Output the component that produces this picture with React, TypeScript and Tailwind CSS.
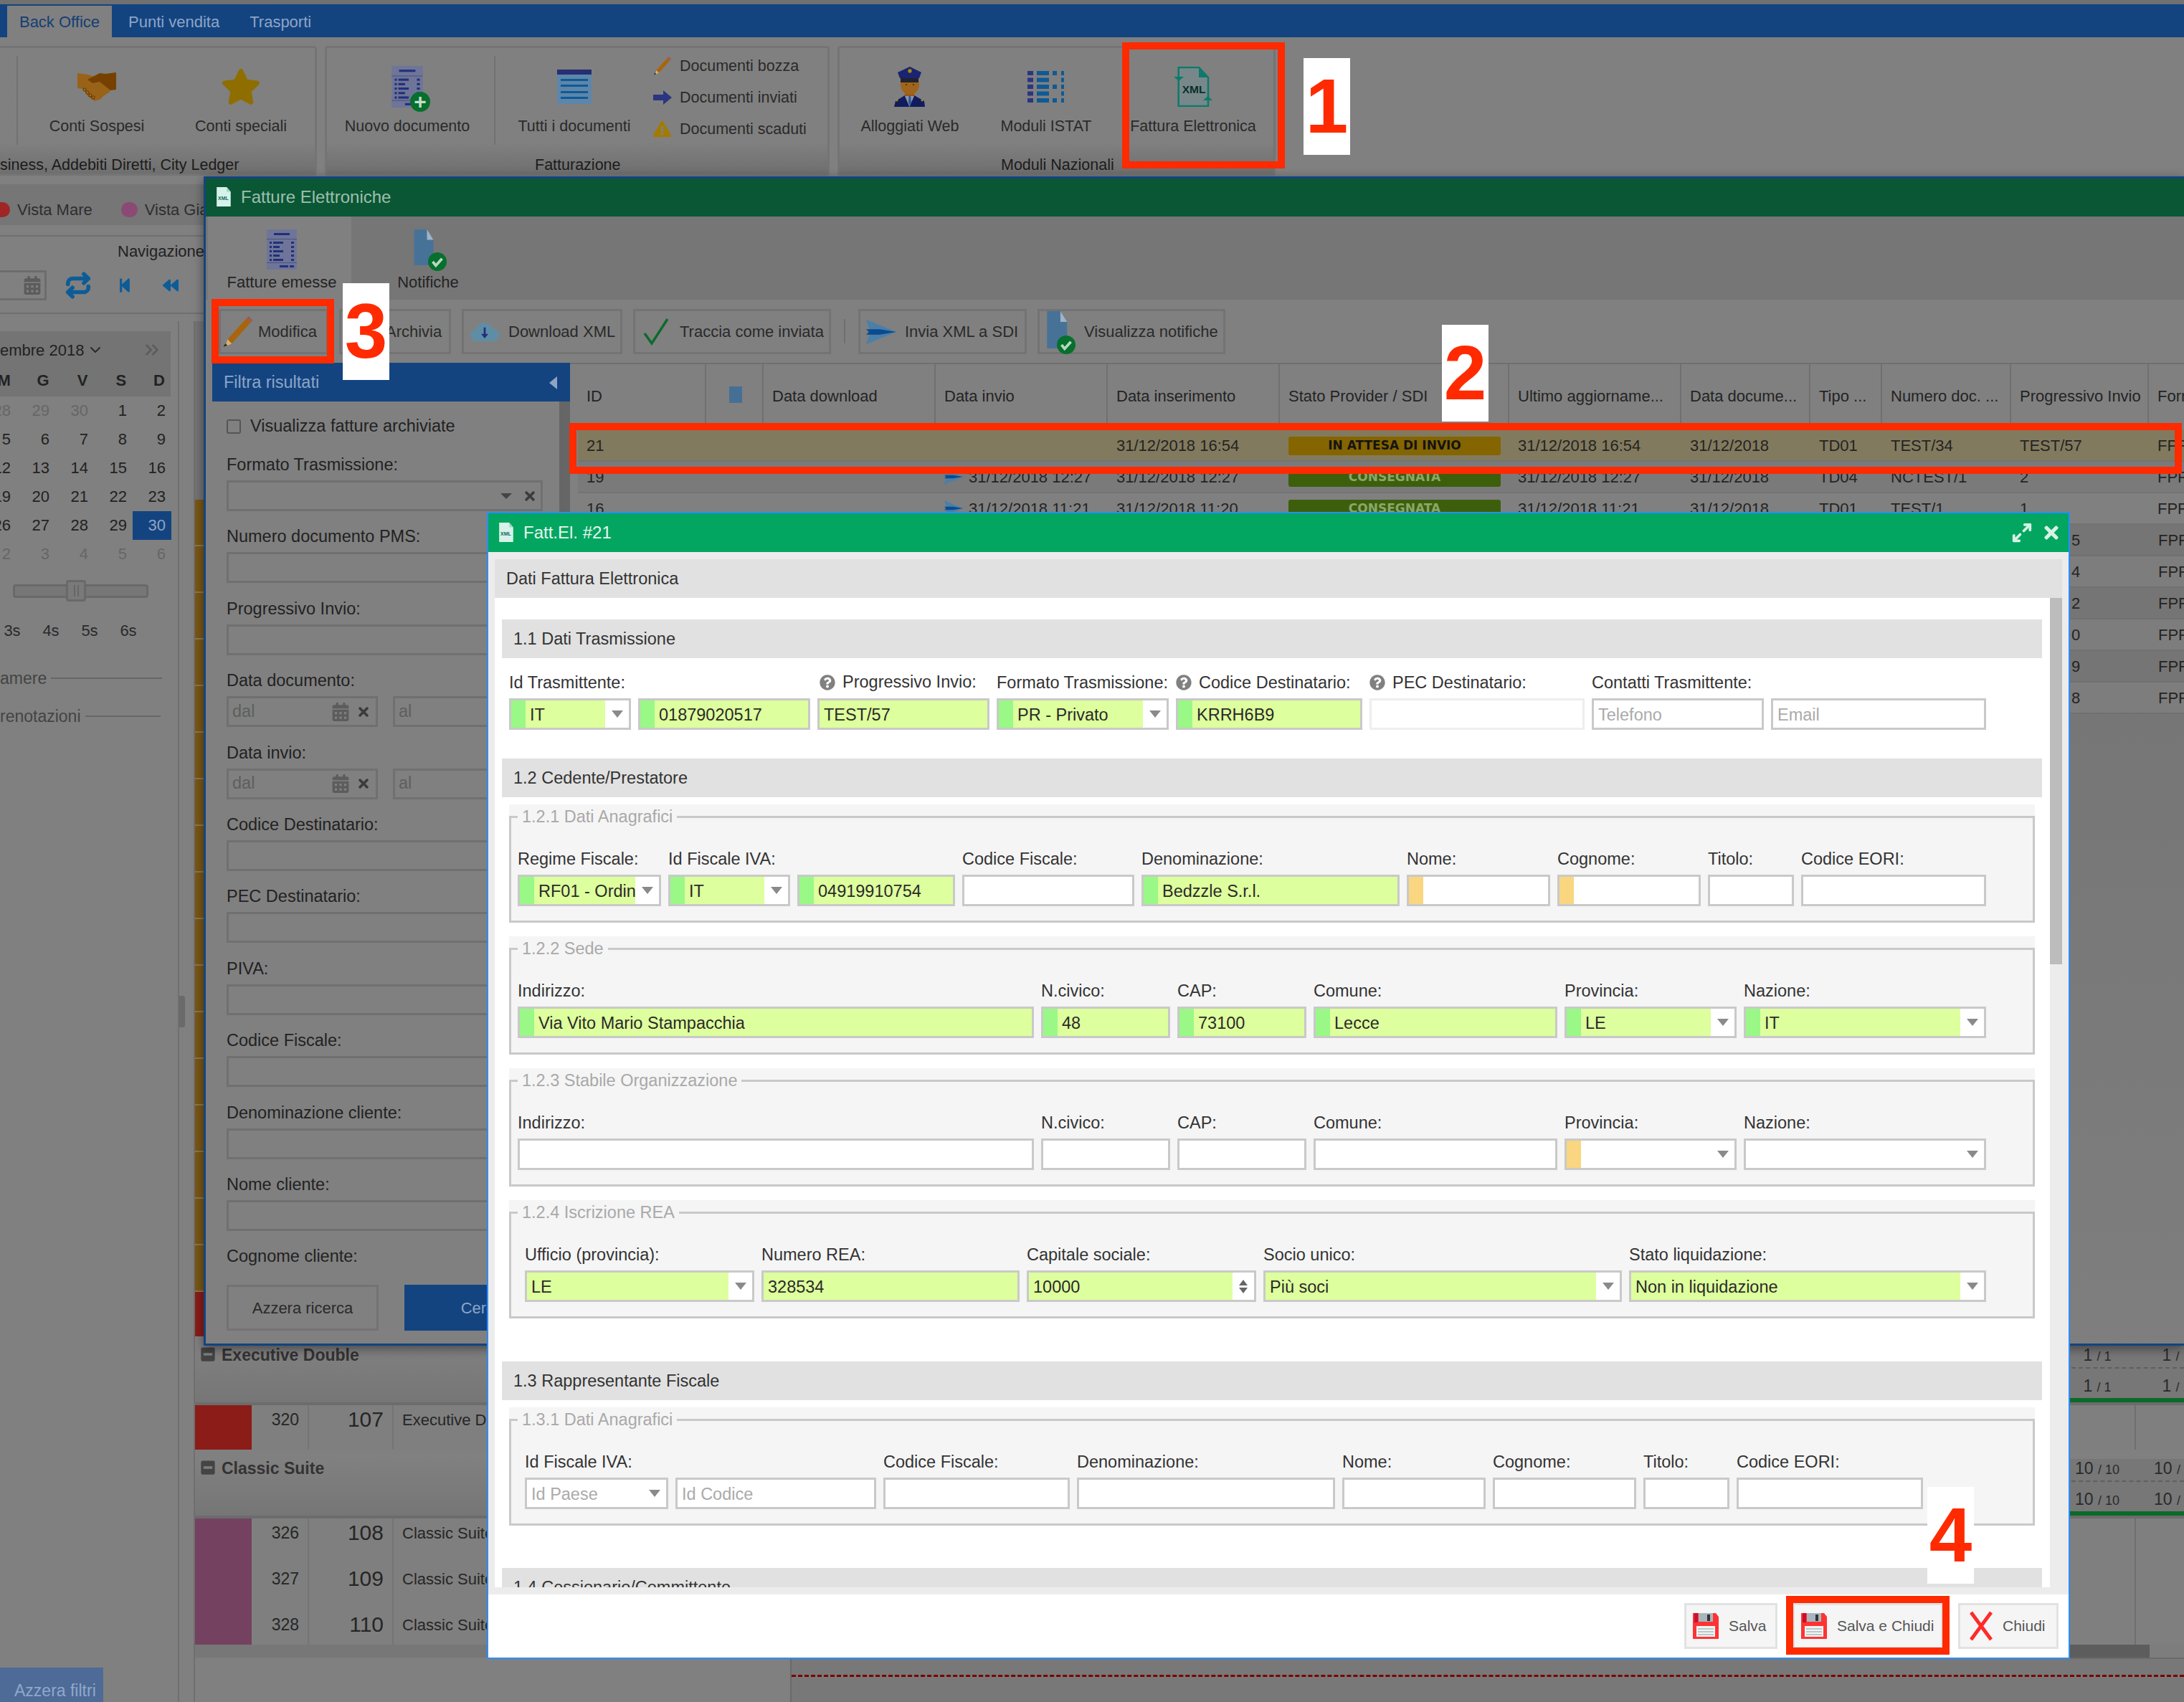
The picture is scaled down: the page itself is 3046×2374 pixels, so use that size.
import { ChevronDown, ChevronsRight, Maximize2, Repeat } from "lucide-react";
import {
  FaBackward,
  FaCalendarAlt,
  FaExclamationTriangle,
  FaMinusSquare,
  FaQuestionCircle,
  FaStar,
  FaStepBackward,
  FaTimes
} from "react-icons/fa";

const DocIcon = ({ className = "w-[54px] h-[58px]" }: { className?: string }) => (
  <svg viewBox="0 0 42 56" className={className}>
    <rect width="42" height="56" fill="#6e7598" />
    <rect x="10" y="5" width="22" height="3" fill="#22307a" />
    <rect y="13" width="42" height="1" fill="#4a5380" />
    <rect y="46" width="42" height="1" fill="#4a5380" />
    {[17, 23, 29, 35, 41].map(y => (
      <g key={y} fill="#22307a">
        <rect x="4" y={y} width="3" height="3" />
        <rect x="9" y={y} width={y % 4 === 1 ? 14 : 9} height="3" />
        <rect x="34" y={y} width="4" height="3" />
      </g>
    ))}
    <rect x="18" y="50" width="12" height="3" fill="#22307a" />
    <rect x="32" y="50" width="6" height="3" fill="#22307a" />
  </svg>
);

const GreenCheck = () => (
  <svg viewBox="0 0 24 24" className="absolute right-[-2px] bottom-[-2px] w-[26px] h-[26px]">
    <circle cx="12" cy="12" r="12" fill="#06702c" />
    <path d="M6 12l4 5 8-9" fill="none" stroke="#b8d8c0" strokeWidth="3.5" />
  </svg>
);

const FileCheck = ({ className }: { className: string }) => (
  <div className={`relative ${className}`}>
    <svg viewBox="0 0 30 56" className="w-[75%] h-[90%]">
      <path d="M0 0h20l10 16v40H0z" fill="#477298" />
      <path d="M20 0l10 16H20z" fill="#9fb4c6" />
    </svg>
    <GreenCheck />
  </div>
);

const XmlIcon = ({ small }: { small?: boolean }) =>
  small ? (
    <svg viewBox="0 0 24 30" className="w-[23px] h-[28px]">
      <path d="M2 0h15l6 7v22H2z" fill="#d6f2ea" />
      <path d="M17 0l6 7h-6z" fill="#9fd8c8" />
      <text x="12" y="19" fontSize="7.5" textAnchor="middle" fill="#0a6a55" fontFamily="Liberation Sans" fontWeight="700">
        XML
      </text>
    </svg>
  ) : (
    <svg viewBox="0 0 54 56" className="w-[54px] h-[56px]">
      <path d="M6.700 1h28.300L48 15v40H6.700z" fill="#78888a" stroke="#0d7a6b" strokeWidth="2.500" />
      <path d="M35 1l13 14H35z" fill="#0d7a6b" />
      <path d="M0 14h14l-7 6zM41 47l6.500-6 6.500 6z" fill="#0d7a6b" />
      <text x="28" y="37" fontSize="15.5" textAnchor="middle" fill="#0a2f2a" fontFamily="Liberation Sans" fontWeight="700">
        XML
      </text>
    </svg>
  );

const Handshake = () => (
  <svg viewBox="0 0 54 41" className="w-[54px] h-[41px]">
    <path d="M0 1l14 2 17 5 15 17-2 3-8 5-3 4-9 3-10-7-6-10-8-1z" fill="#986218" />
    <path d="M14 10L31 1l8 1L54 0v24l-8 1-15-12-10 2z" fill="#764100" />
    {[[10, 24], [14, 28], [18, 32], [22, 35]].map(([cx, cy]) => (
      <circle key={cx} cx={cx} cy={cy} r="2" fill="#a5701e" stroke="#6a3c06" strokeWidth="1.200" />
    ))}
  </svg>
);

const Pencil = ({ className }: { className: string }) => (
  <svg viewBox="0 0 30 30" className={className}>
    <path d="M5 22L23 2l4 4L9 26z" fill="#a9640c" />
    <path d="M23 2l2-2 4 4-2 2z" fill="#9a5a5a" />
    <path d="M5 22l4 4-6 3z" fill="#d4b070" />
    <path d="M1 29l2-3 2 2z" fill="#222" />
  </svg>
);

const Send = ({ className }: { className: string }) => (
  <svg viewBox="0 0 44 36" className={className}>
    <path d="M0 0l44 18L0 36l6-18z" fill="#4a7fa8" />
    <path d="M0 14h20l24 4-24 4H0l4-4z" fill="#0a4a90" />
  </svg>
);

const Cloud = () => (
  <svg viewBox="0 0 44 32" className="w-[40px] h-[30px]">
    <path d="M10 30a9 9 0 0 1-1-18 13 13 0 0 1 25-1 9.500 9.500 0 0 1 1 19z" fill="#5e8ea6" />
    <path d="M20.500 9h3v10h4l-5.500 7-5.500-7h4z" fill="#232f7c" />
  </svg>
);

const Check = () => (
  <svg viewBox="0 0 38 40" className="w-[38px] h-[40px]">
    <path d="M3 22l10 14L35 2" fill="none" stroke="#0e6a2c" strokeWidth="3.500" />
  </svg>
);

const Officer = () => (
  <svg viewBox="0 0 44 60" className="w-[44px] h-[60px]">
    <path d="M0 58l2-8 13-8h13l14 8 1 8z" fill="#101c5e" />
    <path d="M15 43h13l-6.500 15z" fill="#8d95a8" />
    <path d="M20.500 43h2.500l1 9-2 5-2-5z" fill="#2a5a96" />
    <rect x="15" y="36" width="13" height="7" fill="#9a5816" />
    <ellipse cx="22" cy="27" rx="13" ry="14" fill="#a0651a" />
    <rect x="9" y="17" width="25" height="7" fill="#222230" />
    <path d="M5 10L22 2l16 8-3 8H8z" fill="#1a2470" />
    <circle cx="22" cy="8" r="2.700" fill="#a88a10" />
    <circle cx="4" cy="49" r="1.500" fill="#a88a10" />
    <circle cx="39" cy="49" r="1.500" fill="#a88a10" />
    <circle cx="17" cy="27" r="1" fill="#3a2208" />
    <circle cx="27" cy="27" r="1" fill="#3a2208" />
  </svg>
);

const GridList = () => (
  <svg viewBox="0 0 52 44" className="w-[52px] h-[44px]">
    {[0, 9.500, 19, 28.500, 38].map((y, i) => (
      <g key={y}>
        <rect y={y} width="8" height="6" fill="#2c357f" />
        <rect x="13" y={y} width="17" height="6" fill="#0f5a95" />
        {i % 2 === 0 && <rect x="35" y={y} width="6" height="6" fill="#0f5a95" />}
        <rect x="47" y={y} width="4" height="6" fill="#0f5a95" />
      </g>
    ))}
  </svg>
);

const DocLines = () => (
  <svg viewBox="0 0 48 48" className="w-[48px] h-[48px]">
    <rect width="48" height="48" fill="#5d86aa" />
    <rect width="48" height="7" fill="#252f72" />
    {[13, 21, 30, 38].map(y => (
      <rect key={y} x="5" y={y} width="38" height="3" fill="#0f5a95" />
    ))}
  </svg>
);

const Floppy = () => (
  <svg viewBox="0 0 36 36" className="w-[36px] h-[36px] shrink-0">
    <path d="M0 0h32l4 5v31H0z" fill="#ff3333" />
    <rect x="8" y="0" width="20" height="12" fill="#a9b5bd" />
    <rect x="2" y="0" width="5" height="13" fill="#c8102e" />
    <rect x="20" y="2" width="4" height="9" fill="#333" />
    <rect x="5" y="18" width="26" height="15" fill="#f4f4f4" />
    {[21, 25, 29].map(y => (
      <rect key={y} x="7" y={y} width="22" height="2" fill="#b8c8c8" />
    ))}
  </svg>
);

const RibbonItem = ({ icon, label, w }: { icon: React.ReactNode; label: string; w: string }) => (
  <div className={`${w} flex flex-col items-center pt-[12px] shrink-0`}>
    <div className="h-[84px] flex items-center justify-center">{icon}</div>
    <span className="h-[26px] leading-[26px] text-[21.500px] text-[#2a2a2a] whitespace-nowrap">{label}</span>
  </div>
);

const RibbonSep = () => <div className="w-[2px] h-[124px] mt-[11px] bg-[#717171] shrink-0" />;

const RibbonGroup = ({ className, caption, children }: { className: string; caption: React.ReactNode; children: React.ReactNode }) => (
  <div className={`${className} h-[181px] border-[3px] border-[#747474] rounded-[4px] bg-gradient-to-b from-[#808080] from-75% to-[#6f6f6f] flex flex-col overflow-hidden shrink-0`}>
    <div className="flex flex-1">{children}</div>
    <div className="h-[24px] leading-[24px] text-[21.500px] text-[#1c1c1c] whitespace-nowrap">{caption}</div>
  </div>
);

const days = [
  [28, 29, 30, 1, 2],
  [5, 6, 7, 8, 9],
  [12, 13, 14, 15, 16],
  [19, 20, 21, 22, 23],
  [26, 27, 28, 29, 30],
  [2, 3, 4, 5, 6]
];

const Sidebar = () => (
  <div className="w-[250px] border-r-2 border-[#6f6f6f] flex flex-col shrink-0 overflow-hidden">
    <div className="mt-[14px] w-[238px] h-[91px] bg-[#747474] flex flex-col">
      <div className="flex items-center h-[52px] text-[22px] text-[#222] whitespace-nowrap">
        <span>embre 2018</span>
        <ChevronDown className="ml-[4px] w-[24px] h-[24px] text-[#2a2a2a]" strokeWidth={2} />
        <ChevronsRight className="ml-[52px] w-[30px] h-[30px] text-[#5c5c5c]" strokeWidth={2} />
      </div>
      <div className="flex ml-[-31px] text-[22px] font-bold text-[#222]">
        {["M", "G", "V", "S", "D"].map(d => (
          <span key={d} className="w-[54px] text-right pr-[8px]">{d}</span>
        ))}
      </div>
    </div>
    {days.map((week, i) => (
      <div key={i} className="flex ml-[-31px] h-[40px] items-center text-[22px]">
        {week.map((d, j) => {
          const other = i === 0 && j < 3 || i === 5;
          const active = i === 4 && j === 4;
          return (
            <span
              key={j}
              className={`w-[54px] h-[40px] leading-[40px] text-right pr-[8px] ${active ? "bg-[#134480] text-[#90a5c0]" : other ? "text-[#666]" : "text-[#222]"}`}
            >
              {d}
            </span>
          );
        })}
      </div>
    ))}
    <div className="relative mt-[22px] ml-[18px] w-[189px] h-[19px] bg-[#777] border-[3px] border-[#696969] rounded-[4px]">
      <div className="absolute left-[71px] top-[-9px] w-[28px] h-[30px] bg-[#7a7a7a] border-[3px] border-[#696969] rounded-[4px] flex items-center justify-center gap-[3px]">
        <span className="w-[2px] h-[16px] bg-[#666]" />
        <span className="w-[2px] h-[16px] bg-[#666]" />
      </div>
    </div>
    <div className="flex ml-[-10px] mt-[29px] text-[22px] text-[#2a2a2a]">
      {["3s", "4s", "5s", "6s"].map(s => (
        <span key={s} className="w-[54px] text-center">{s}</span>
      ))}
    </div>
    <div className="flex items-center mt-[36px] text-[23px] text-[#444] h-[28px]">
      <span>amere</span>
      <div className="ml-[6px] w-[155px] h-[2px] bg-[#666]" />
    </div>
    <div className="flex items-center mt-[25px] text-[23px] text-[#444] h-[28px]">
      <span>renotazioni</span>
      <div className="ml-[6px] w-[105px] h-[2px] bg-[#666]" />
    </div>
    <div className="mt-auto w-[144px] h-[48px] bg-[#4e6a96] pl-[20px] text-[23px] leading-[64px] text-[#8fa8cc] whitespace-nowrap overflow-hidden">
      Azzera filtri
    </div>
  </div>
);

const RightCells = () => (
  <div className="ml-auto flex w-[167px] h-full shrink-0">
    <div className="w-[100px] border-r-2 border-[#6f6f6f]" />
  </div>
);

const Ratio = ({ value, className }: { value: number; className: string }) => (
  <span className={`w-[100px] shrink-0 text-center whitespace-nowrap ${className}`}>
    {value} <span className="text-[18px]">/ {value}</span>
  </span>
);

const GroupHeader = ({ label, value }: { label: string; value: number }) => (
  <div className="flex h-[79px] bg-gradient-to-b from-[#808080] to-[#767676]">
    <div className="flex items-start gap-[9px] pl-[8px] font-bold text-[23px] leading-[26px] text-[#333] w-[410px] shrink-0">
      <FaMinusSquare className="w-[20px] h-[22px] mt-[1px] text-[#444]" />
      <span>{label}</span>
    </div>
    <div className="ml-auto w-[167px] shrink-0 text-[#2a2a2a] text-[23px] bg-[#777777] overflow-hidden">
      <div className="flex h-[32px] leading-[26px] border-b-2 border-dashed border-[#5f5f5f]">
        <Ratio value={value} className="pr-[8px]" />
        <Ratio value={value} className="pl-[12px]" />
      </div>
      <div className="flex h-[47px] pt-[7px] border-b-[6px] border-[#0a6a2a]">
        <Ratio value={value} className="pr-[8px]" />
        <Ratio value={value} className="pl-[12px]" />
      </div>
    </div>
  </div>
);

const GridRow = ({ colour, code, room, name, h }: { colour: string; code: number; room: number; name: string; h: string }) => (
  <div className={`flex ${h} text-[#262626] bg-[#7f7f7f]`}>
    <div className={`w-[79px] ${colour}`} />
    <div className="w-[80px] border-r-2 border-[#747474] flex items-start justify-end pr-[12px] pt-[3px] text-[23px]">{code}</div>
    <div className="w-[118px] border-r-2 border-[#747474] flex items-start justify-end pr-[12px] pt-[5px] text-[30px] leading-[30px]">{room}</div>
    <div className="pl-[12px] pt-[4px] text-[22px] whitespace-nowrap">{name}</div>
    <RightCells />
  </div>
);

const BaseGrid = () => (
  <div className="flex-1 min-w-0 border-l-2 border-[#6f6f6f] flex flex-col overflow-hidden">
    <div className="h-[1429px] flex flex-col w-[14px] shrink-0">
      <div className="h-[249px] bg-[#747474]" />
      {Array.from({ length: 17 }).map((_, i) => (
        <div key={i} className="h-[65px] bg-[#7a5715] border-b-2 border-[#8a7a50]" />
      ))}
      <div className="h-[62px] bg-[#8b1c18]" />
    </div>
    <GroupHeader label="Executive Double" value={1} />
    <div className="h-[4px] bg-[#6c6c6c]" />
    <GridRow colour="bg-[#8b1c18]" code={320} room={107} name="Executive Double" h="h-[62px]" />
    <div className="h-[13px] bg-[#808080]" />
    <GroupHeader label="Classic Suite" value={10} />
    <div className="h-[4px] bg-[#6c6c6c]" />
    <GridRow colour="bg-[#744260]" code={326} room={108} name="Classic Suite" h="h-[64px]" />
    <GridRow colour="bg-[#744260]" code={327} room={109} name="Classic Suite" h="h-[64px]" />
    <GridRow colour="bg-[#744260]" code={328} room={110} name="Classic Suite" h="h-[48px]" />
    <div className="h-[18px] bg-[#777] flex justify-end">
      <div className="w-[112px] bg-[#5d5d5d]" />
      <div className="w-[48px] bg-[#7d7d7d]" />
    </div>
    <div className="flex-1 bg-[#787878] border-t-2 border-[#6a6a6a] ml-[830px] border-l-2 pt-[22px]">
      <div className="border-t-[3px] border-dashed border-[#7a0000]" />
    </div>
  </div>
);

const BaseApp = () => (
  <div className="flex flex-col h-full bg-[#808080]">
    <div className="h-[6px] bg-[#707070] shrink-0" />
    <div className="h-[46px] bg-[#134480] flex items-end pl-[10px] text-[22px] shrink-0">
      <div className="w-[146px] h-[44px] bg-[#808080] text-[#143f74] flex items-center justify-center">Back Office</div>
      <div className="h-[44px] flex items-center px-[23px] text-[#8ea5c6]">Punti vendita</div>
      <div className="h-[44px] flex items-center px-[19px] text-[#8ea5c6]">Trasporti</div>
    </div>
    <div className="h-[205px] pt-[12px] flex gap-[11px] shrink-0">
      <RibbonGroup className="w-[442px] rounded-l-none border-l-0" caption="siness, Addebiti Diretti, City Ledger">
        <div className="ml-[23px] flex">
          <RibbonSep />
          <div className="w-[10px]" />
          <RibbonItem w="w-[200px]" label="Conti Sospesi" icon={<Handshake />} />
          <RibbonItem w="w-[202px]" label="Conti speciali" icon={<FaStar className="w-[56px] h-[54px] text-[#8f6e00]" />} />
        </div>
      </RibbonGroup>
      <RibbonGroup className="w-[704px]" caption={<span className="pl-[290px]">Fatturazione</span>}>
        <RibbonItem
          w="w-[224px]"
          label="Nuovo documento"
          icon={
            <div className="relative">
              <DocIcon className="w-[44px] h-[58px]" />
              <div className="absolute right-[-10px] bottom-[-6px] w-[28px] h-[28px] rounded-full bg-[#06702c] flex items-center justify-center text-[#c8dccb] text-[30px] font-bold leading-none">+</div>
            </div>
          }
        />
        <div className="w-[9px]" />
        <RibbonSep />
        <RibbonItem w="w-[220px]" label="Tutti i documenti" icon={<DocLines />} />
        <div className="pt-[3px] flex flex-col text-[21.500px] text-[#2a2a2a]">
          {[
            { label: "Documenti bozza", icon: <Pencil className="w-[26px] h-[26px]" /> },
            {
              label: "Documenti inviati",
              icon: (
                <svg viewBox="0 0 26 20" className="w-[26px] h-[20px]">
                  <path d="M0 6h14V0l12 10-12 10v-6H0z" fill="#2c357f" />
                </svg>
              )
            },
            { label: "Documenti scaduti", icon: <FaExclamationTriangle className="w-[25px] h-[24px] text-[#a37a00]" /> }
          ].map(item => (
            <div key={item.label} className="h-[44px] flex items-center">
              <div className="w-[37px]">{item.icon}</div>
              <span className="whitespace-nowrap">{item.label}</span>
            </div>
          ))}
        </div>
      </RibbonGroup>
      <RibbonGroup className="w-[611px]" caption={<span className="pl-[225px]">Moduli Nazionali</span>}>
        <RibbonItem w="w-[196px]" label="Alloggiati Web" icon={<Officer />} />
        <RibbonItem w="w-[184px]" label="Moduli ISTAT" icon={<GridList />} />
        <RibbonItem w="w-[226px]" label="Fattura Elettronica" icon={<XmlIcon />} />
      </RibbonGroup>
    </div>
    <div className="h-[57px] pt-[14px] bg-[#767676] flex items-center text-[22px] text-[#2e2e2e] shrink-0">
      <div className="w-[14px] h-[21px] rounded-r-full bg-[#a02626]" />
      <span className="ml-[10px]">Vista Mare</span>
      <div className="ml-[40px] w-[23px] h-[21px] rounded-full bg-[#8a4a74]" />
      <span className="ml-[10px]">Vista Giardino</span>
    </div>
    <div className="h-[134px] pt-[14px] shrink-0">
      <div className="h-[110px] border-y-2 border-[#6f6f6f] flex flex-col">
        <div className="pl-[164px] pt-[4px] h-[36px] text-[22px] text-[#222]">Navigazione</div>
        <div className="flex items-center h-[44px] mt-[10px]">
          <div className="w-[65px] h-[42px] border-[3px] border-l-0 border-[#6d6d6d] flex items-center justify-end pr-[5px]">
            <FaCalendarAlt className="w-[24px] h-[26px] text-[#5c5c5c]" />
          </div>
          <Repeat className="ml-[25px] w-[38px] h-[38px] text-[#0d5c96]" strokeWidth={3.5} />
          <FaStepBackward className="ml-[36px] w-[20px] h-[22px] text-[#0d5c96]" />
          <FaBackward className="ml-[40px] w-[28px] h-[22px] text-[#0d5c96]" />
        </div>
      </div>
    </div>
    <div className="flex flex-1 min-h-0">
      <Sidebar />
      <div className="w-[20px] flex items-center shrink-0">
        <div className="w-[8px] h-[44px] bg-[#6a6a6a] rounded-r-[3px]" />
      </div>
      <BaseGrid />
    </div>
  </div>
);

const FilterField = ({ label, children }: { label: string; children?: React.ReactNode }) => (
  <div className="mb-[18.400px]">
    <div className="h-[34px] leading-[34px] text-[#222] whitespace-nowrap">{label}</div>
    <div className="mt-[5px] h-[43px] flex gap-[21px]">
      {children ?? <div className="w-full border-[3px] border-[#707070]" />}
    </div>
  </div>
);

const DateRange = () => (
  <>
    <div className="w-[211px] border-[3px] border-[#707070] flex items-center pl-[5px] pr-[7px] text-[#5e5e5e]">
      <span>dal</span>
      <FaCalendarAlt className="ml-auto w-[24px] h-[26px] text-[#5c5c5c]" />
      <FaTimes className="ml-[10px] w-[20px] h-[20px] text-[#3c3c3c]" />
    </div>
    <div className="w-[209px] border-[3px] border-[#707070] flex items-center pl-[5px] text-[#5e5e5e]">al</div>
  </>
);

const FilterPanel = () => (
  <div className="w-[508px] pl-[9px] flex flex-col shrink-0">
    <div className="h-[54px] bg-[#134480] flex items-center pl-[16px] pr-[18px] pt-[2px] text-[23.500px] text-[#8ea5c6] shrink-0">
      Filtra risultati
      <span className="ml-auto w-0 h-0 border-y-[9px] border-y-transparent border-r-[11px] border-r-[#8ea5c6]" />
    </div>
    <div className="flex h-[1210px] shrink-0 overflow-hidden">
      <div className="w-[484px] pl-[20px] pr-[23px] pt-[25px] text-[23.500px]">
        <div className="h-[20px] flex items-center mb-[26px] text-[#222]">
          <span className="w-[20px] h-[20px] border-2 border-[#555] rounded-[3px] mr-[13px]" />
          Visualizza fatture archiviate
        </div>
        <FilterField label="Formato Trasmissione:">
          <div className="w-full border-[3px] border-[#707070] flex items-center justify-end pr-[5px]">
            <span className="w-0 h-0 border-x-[8px] border-x-transparent border-t-[8px] border-t-[#444]" />
            <FaTimes className="ml-[15px] w-[20px] h-[20px] text-[#3c3c3c]" />
          </div>
        </FilterField>
        <FilterField label="Numero documento PMS:" />
        <FilterField label="Progressivo Invio:" />
        <FilterField label="Data documento:"><DateRange /></FilterField>
        <FilterField label="Data invio:"><DateRange /></FilterField>
        <FilterField label="Codice Destinatario:" />
        <FilterField label="PEC Destinatario:" />
        <FilterField label="PIVA:" />
        <FilterField label="Codice Fiscale:" />
        <FilterField label="Denominazione cliente:" />
        <FilterField label="Nome cliente:" />
        <FilterField label="Cognome cliente:" />
      </div>
      <div className="w-[15px] bg-[#666]" />
    </div>
    <div className="flex pt-[22px] pl-[20px] gap-[36px] text-[22px]">
      <div className="w-[212px] h-[64px] border-[3px] border-[#737373] flex items-center justify-center text-[#2a2a2a]">Azzera ricerca</div>
      <div className="w-[216px] h-[64px] bg-[#134480] flex items-center justify-center text-[#8ea5c6]">Cerca</div>
    </div>
  </div>
);

const colWidths = [
  "w-[179px]", "w-[80px]", "w-[240px]", "w-[240px]", "w-[240px]", "w-[320px]",
  "w-[240px]", "w-[180px]", "w-[100px]", "w-[180px]", "w-[192px]", "w-[60px]"
];

const headers = [
  "ID", "", "Data download", "Data invio", "Data inserimento", "Stato Provider / SDI",
  "Ultimo aggiorname...", "Data docume...", "Tipo ...", "Numero doc. ...", "Progressivo Invio", "Forn"
];

const SentDate = ({ date }: { date: string }) => (
  <span className="flex items-center gap-[8px]">
    <Send className="w-[26px] h-[26px] shrink-0" />
    {date}
  </span>
);

const Badge = ({ label, waiting }: { label: string; waiting?: boolean }) => (
  <div className={`mt-[2px] h-[26px] w-[296px] rounded-[3px] flex items-center justify-center font-['DejaVu_Sans',sans-serif] font-bold text-[17px] ${waiting ? "bg-[#856500] text-[#141414]" : "bg-[#3d5f0b] text-[#8aa86a]"}`}>
    {label}
  </div>
);

const rows = [
  { bg: "bg-[#827a5e]", cells: ["21", "", "", "", "31/12/2018 16:54", <Badge key="b" waiting label="IN ATTESA DI INVIO" />, "31/12/2018 16:54", "31/12/2018", "TD01", "TEST/34", "TEST/57", "FPR"] },
  { bg: "bg-[#7a7a7a]", cells: ["19", "", "", <SentDate key="d" date="31/12/2018 12:27" />, "31/12/2018 12:27", <Badge key="b" label="CONSEGNATA" />, "31/12/2018 12:27", "31/12/2018", "TD04", "NCTEST/1", "2", "FPR"] },
  { bg: "bg-[#808080]", cells: ["16", "", "", <SentDate key="d" date="31/12/2018 11:21" />, "31/12/2018 11:20", <Badge key="b" label="CONSEGNATA" />, "31/12/2018 11:21", "31/12/2018", "TD01", "TEST/1", "1", "FPR"] }
];

const DocsTable = () => (
  <div className="flex-1 min-w-0 pl-[11px] flex flex-col text-[22px] text-[#242424] border-t-2 border-[#6f6f6f]">
    <div className="flex h-[92px] shrink-0">
      {headers.map((h, i) => (
        <div key={i} className={`${colWidths[i]} shrink-0 border-r-2 border-[#707070] pl-[12px] pt-[28px] whitespace-nowrap overflow-hidden`}>
          {i === 1 ? <div className="ml-[20px] mt-[3px] w-[18px] h-[23px] bg-[#466f95]" /> : h}
        </div>
      ))}
    </div>
    {rows.map((row, r) => (
      <div key={r} className={`flex h-[44px] items-center shrink-0 border-b-2 border-[#737373] ${row.bg}`}>
        {row.cells.map((c, i) => (
          <div key={i} className={`${colWidths[i]} shrink-0 pl-[12px] whitespace-nowrap`}>{c}</div>
        ))}
      </div>
    ))}
    {["5", "4", "2", "0", "9", "8"].map((d, i) => (
      <div key={d} className={`flex h-[44px] items-center shrink-0 border-b-2 border-[#707070] ${i % 2 === 0 ? "bg-[#757575]" : "bg-[#7d7d7d]"}`}>
        <div className="ml-[2083px] w-[121px] shrink-0">{d}</div>
        <span>FPR</span>
      </div>
    ))}
    <div className="flex-1 bg-gradient-to-b from-[#767676] to-[#7e7e7e]" />
  </div>
);

const ToolButton = ({ w, icon, label, box = "w-[42px]" }: { w: string; icon: React.ReactNode; label: string; box?: string }) => (
  <div className={`${w} h-[63px] border-[3px] border-[#737373] flex items-center pl-[8px] shrink-0`}>
    <div className={`${box} flex justify-center`}>{icon}</div>
    <span className="ml-[12px] whitespace-nowrap">{label}</span>
  </div>
);

const FattureWindow = () => (
  <div className="absolute left-[284px] top-[246px] w-[2762px] h-[1631px] border-[3px] border-r-0 border-[#134480] bg-[#808080] flex flex-col shadow-[0_4px_14px_rgba(0,0,0,0.45)]">
    <div className="h-[53px] bg-[#0a5735] flex items-center pl-[13px] pb-[2px] text-[24px] text-[#9fbfae] shrink-0">
      <XmlIcon small />
      <span className="ml-[13px]">Fatture Elettroniche</span>
    </div>
    <div className="h-[116px] bg-[#767676] flex text-[22px] text-[#242424] shrink-0">
      <div className="ml-[3px] w-[200px] bg-[#808080] flex flex-col items-center pt-[18px] pl-[6px]">
        <DocIcon className="w-[44px] h-[56px]" />
        <span className="mt-[1px]">Fatture emesse</span>
      </div>
      <div className="w-[214px] flex flex-col items-center pt-[18px]">
        <FileCheck className="w-[48px] h-[56px]" />
        <span className="mt-[1px]">Notifiche</span>
      </div>
    </div>
    <div className="h-[88px] pt-[13px] pl-[18px] flex gap-[15px] text-[22px] text-[#2a2a2a] shrink-0">
      <ToolButton w="w-[153px]" box="w-[32px]" label="Modifica" icon={<Pencil className="w-[44px] h-[44px] shrink-0" />} />
      <ToolButton w="w-[156px]" label="Archivia" icon={<span />} />
      <ToolButton w="w-[224px]" label="Download XML" icon={<Cloud />} />
      <ToolButton w="w-[276px]" label="Traccia come inviata" icon={<Check />} />
      <div className="w-[2px] h-[34px] mt-[14px] mx-[3px] bg-[#707070]" />
      <ToolButton w="w-[235px]" label="Invia XML a SDI" icon={<Send className="w-[44px] h-[50px]" />} />
      <ToolButton w="w-[262px]" label="Visualizza notifiche" icon={<FileCheck className="w-[38px] h-[58px]" />} />
    </div>
    <div className="flex flex-1 min-h-0 overflow-hidden">
      <FilterPanel />
      <DocsTable />
    </div>
  </div>
);

const Caret = () => <span className="w-0 h-0 border-x-[8px] border-x-transparent border-t-[10px] border-t-[#8a8a8a]" />;

type FieldProps = {
  w: string;
  label?: string;
  help?: boolean;
  value?: string;
  mark?: "green" | "orange";
  select?: boolean;
  spin?: boolean;
  placeholder?: string;
  faint?: boolean;
};

const Field = ({ w, label, help, value, mark, select, spin, placeholder, faint }: FieldProps) => (
  <div className={`${w} shrink-0`}>
    <div className="h-[26px] leading-[26px] flex items-center text-[#333] whitespace-nowrap">
      {help && <FaQuestionCircle className="w-[22px] h-[22px] mr-[10px] shrink-0 text-[#808080]" />}
      {label}
    </div>
    <div className={`mt-[9px] h-[44px] border-[3px] ${faint ? "border-[#eeeeee]" : "border-[#c9c9c9]"} bg-white flex overflow-hidden`}>
      {mark && <div className={`w-[20px] shrink-0 ${mark === "green" ? "bg-[#9af887]" : "bg-[#f9d67f]"}`} />}
      <div className={`flex-1 min-w-0 px-[6px] pt-[4px] flex items-center whitespace-nowrap overflow-hidden ${value ? "bg-[#deff9d] text-[#2a2a2a]" : "text-[#aaaaaa]"}`}>
        {value ?? placeholder}
      </div>
      {select && (
        <div className="w-[33px] shrink-0 flex items-center justify-center bg-white">
          <Caret />
        </div>
      )}
      {spin && (
        <div className="w-[30px] shrink-0 flex flex-col items-center justify-center gap-[3px] bg-white">
          <span className="w-0 h-0 border-x-[6px] border-x-transparent border-b-[8px] border-b-[#666]" />
          <span className="w-0 h-0 border-x-[6px] border-x-transparent border-t-[8px] border-t-[#666]" />
        </div>
      )}
    </div>
  </div>
);

const SectionBar = ({ label, className = "" }: { label: string; className?: string }) => (
  <div className={`h-[54px] bg-[#e1e1e1] flex items-center pl-[16px] pt-[2px] text-[#333] ${className}`}>{label}</div>
);

const FieldSet = ({ legend, className, pad, children }: { legend: string; className: string; pad: string; children: React.ReactNode }) => (
  <div className={`mx-[10px] bg-[#f5f5f5] ${className}`}>
    <fieldset className="border-[3px] border-[#c9c9c9] pt-[29px] pb-[20px]">
      <legend className="ml-[9px] px-[6px] h-[34px] leading-[34px] text-[#a9a9a9]">{legend}</legend>
      <div className={`flex gap-[10px] ${pad}`}>{children}</div>
    </fieldset>
  </div>
);

const FooterButton = ({ w, icon, label }: { w: string; icon: React.ReactNode; label: string }) => (
  <div className={`${w} h-[64px] bg-[#f5f5f5] border-[3px] border-[#e2e2e2] flex items-center pl-[9px] gap-[14px] text-[21px] text-[#555]`}>
    {icon}
    <span className="whitespace-nowrap">{label}</span>
  </div>
);

const Modal = () => (
  <div className="absolute left-[679px] top-[714px] w-[2208px] h-[1600px] border-2 border-[#2b8cff] bg-white flex flex-col text-[23.500px]">
    <div className="h-[54px] bg-[#03a660] flex items-center pl-[13px] pr-[12px] pb-[1px] text-[24px] text-[#e8f7f0] shrink-0">
      <XmlIcon small />
      <span className="ml-[13px]">Fatt.El. #21</span>
      <Maximize2 className="ml-auto w-[30px] h-[30px] text-[#d6f2e6]" strokeWidth={3} />
      <FaTimes className="ml-[14px] w-[24px] h-[28px] text-[#d6f2e6]" />
    </div>
    <div className="bg-[#ececec] pt-[10px] pl-[9px] pr-[9px] pb-[10px] flex flex-col shrink-0">
      <SectionBar label="Dati Fattura Elettronica" />
      <div className="flex h-[1380px]">
        <div className="flex-1 min-w-0 bg-white pt-[30px] pl-[10px] pr-[11px] overflow-hidden">
          <SectionBar label="1.1 Dati Trasmissione" />
          <div className="mt-[21px] ml-[10px] flex gap-[10px]">
            <Field w="w-[170px]" label="Id Trasmittente:" mark="green" value="IT" select />
            <Field w="w-[240px]" mark="green" value="01879020517" />
            <div className="w-[240px] shrink-0">
              <div className="h-[26px] flex items-center text-[#333] whitespace-nowrap">
                <FaQuestionCircle className="ml-[3px] w-[22px] h-[22px] mr-[10px] shrink-0 text-[#808080]" />
                Progressivo Invio:
              </div>
              <div className="mt-[9px] h-[44px] border-[3px] border-[#c9c9c9] bg-[#deff9d] px-[6px] pt-[4px] flex items-center text-[#2a2a2a]">TEST/57</div>
            </div>
            <Field w="w-[240px]" label="Formato Trasmissione:" mark="green" value="PR - Privato" select />
            <Field w="w-[260px]" help label="Codice Destinatario:" mark="green" value="KRRH6B9" />
            <Field w="w-[300px]" help label="PEC Destinatario:" faint />
            <Field w="w-[240px]" label="Contatti Trasmittente:" placeholder="Telefono" />
            <Field w="w-[300px]" placeholder="Email" />
          </div>
          <SectionBar label="1.2 Cedente/Prestatore" className="mt-[40px]" />
          <FieldSet legend="1.2.1 Dati Anagrafici" className="mt-[10px]" pad="pl-[9px]">
            <Field w="w-[200px]" label="Regime Fiscale:" mark="green" value="RF01 - Ordinario" select />
            <Field w="w-[170px]" label="Id Fiscale IVA:" mark="green" value="IT" select />
            <Field w="w-[220px]" mark="green" value="04919910754" />
            <Field w="w-[240px]" label="Codice Fiscale:" />
            <Field w="w-[360px]" label="Denominazione:" mark="green" value="Bedzzle S.r.l." />
            <Field w="w-[200px]" label="Nome:" mark="orange" />
            <Field w="w-[200px]" label="Cognome:" mark="orange" />
            <Field w="w-[120px]" label="Titolo:" />
            <Field w="w-[258px]" label="Codice EORI:" />
          </FieldSet>
          <FieldSet legend="1.2.2 Sede" className="mt-[19px]" pad="pl-[9px]">
            <Field w="w-[720px]" label="Indirizzo:" mark="green" value="Via Vito Mario Stampacchia" />
            <Field w="w-[180px]" label="N.civico:" mark="green" value="48" />
            <Field w="w-[180px]" label="CAP:" mark="green" value="73100" />
            <Field w="w-[340px]" label="Comune:" mark="green" value="Lecce" />
            <Field w="w-[240px]" label="Provincia:" mark="green" value="LE" select />
            <Field w="w-[338px]" label="Nazione:" mark="green" value="IT" select />
          </FieldSet>
          <FieldSet legend="1.2.3 Stabile Organizzazione" className="mt-[19px]" pad="pl-[9px]">
            <Field w="w-[720px]" label="Indirizzo:" />
            <Field w="w-[180px]" label="N.civico:" />
            <Field w="w-[180px]" label="CAP:" />
            <Field w="w-[340px]" label="Comune:" />
            <Field w="w-[240px]" label="Provincia:" mark="orange" select />
            <Field w="w-[338px]" label="Nazione:" select />
          </FieldSet>
          <FieldSet legend="1.2.4 Iscrizione REA" className="mt-[19px]" pad="pl-[19px]">
            <Field w="w-[320px]" label="Ufficio (provincia):" value="LE" select />
            <Field w="w-[360px]" label="Numero REA:" value="328534" />
            <Field w="w-[320px]" label="Capitale sociale:" value="10000" spin />
            <Field w="w-[500px]" label="Socio unico:" value="Più soci" select />
            <Field w="w-[498px]" label="Stato liquidazione:" value="Non in liquidazione" select />
          </FieldSet>
          <SectionBar label="1.3 Rappresentante Fiscale" className="mt-[60px]" />
          <FieldSet legend="1.3.1 Dati Anagrafici" className="mt-[10px]" pad="pl-[19px]">
            <Field w="w-[200px]" label="Id Fiscale IVA:" placeholder="Id Paese" select />
            <Field w="w-[280px]" placeholder="Id Codice" />
            <Field w="w-[260px]" label="Codice Fiscale:" />
            <Field w="w-[360px]" label="Denominazione:" />
            <Field w="w-[200px]" label="Nome:" />
            <Field w="w-[200px]" label="Cognome:" />
            <Field w="w-[120px]" label="Titolo:" />
            <Field w="w-[260px]" label="Codice EORI:" />
          </FieldSet>
          <SectionBar label="1.4 Cessionario/Committente" className="mt-[59px]" />
        </div>
        <div className="w-[17px] bg-[#ececec] shrink-0">
          <div className="h-[511px] bg-[#bcbcbc]" />
        </div>
      </div>
    </div>
    <div className="flex-1 flex justify-end items-start pt-[12px] pr-[14px] gap-[21px]">
      <FooterButton w="w-[130px]" label="Salva" icon={<Floppy />} />
      <FooterButton w="w-[210px]" label="Salva e Chiudi" icon={<Floppy />} />
      <FooterButton
        w="w-[140px]"
        label="Chiudi"
        icon={
          <svg viewBox="0 0 32 42" className="w-[32px] h-[42px] shrink-0 ml-[4px]">
            <path d="M2 2l28 38M30 2L2 40" stroke="#ff2a2a" strokeWidth="5" fill="none" />
          </svg>
        }
      />
    </div>
  </div>
);

const RedBox = ({ className }: { className: string }) => (
  <div className={`absolute border-[10px] border-[#ff2a00] ${className}`} />
);

const Num = ({ className, n }: { className: string; n: number }) => (
  <div className={`absolute w-[65px] h-[135px] bg-white flex items-center justify-center font-bold text-[107px] leading-none text-[#ff2a00] ${className}`}>
    {n}
  </div>
);

export default function App() {
  return (
    <div className="relative w-[3046px] h-[2374px] overflow-hidden font-['Liberation_Sans',sans-serif]">
      <BaseApp />
      <FattureWindow />
      <Modal />
      <RedBox className="left-[1565px] top-[59px] w-[227px] h-[176px]" />
      <Num n={1} className="left-[1818px] top-[81px]" />
      <RedBox className="left-[794px] top-[590px] w-[2249px] h-[71px]" />
      <Num n={2} className="left-[2011px] top-[453px]" />
      <RedBox className="left-[295px] top-[417px] w-[171px] h-[90px]" />
      <Num n={3} className="left-[478px] top-[395px]" />
      <RedBox className="left-[2491px] top-[2226px] w-[228px] h-[82px]" />
      <Num n={4} className="left-[2688px] top-[2074px]" />
    </div>
  );
}
